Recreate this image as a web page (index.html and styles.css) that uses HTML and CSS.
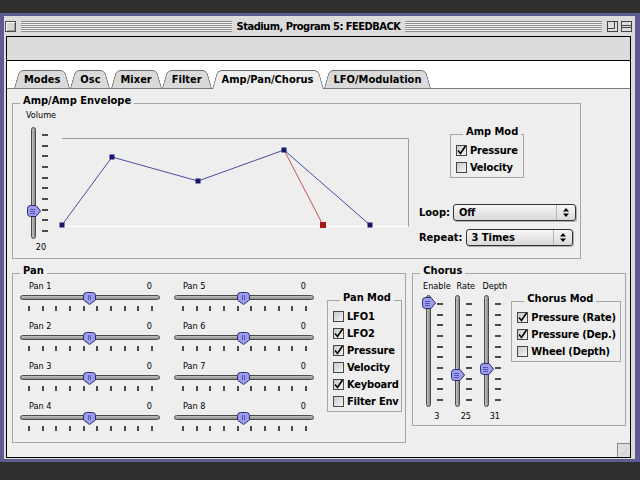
FILE: index.html
```html
<!DOCTYPE html>
<html lang="en">
<head>
    <meta charset="UTF-8">
    <title>Stadium, Program 5: FEEDBACK</title>
    <link rel="stylesheet" href="styles.css">
</head>
<body>
<svg class="defs" width="0" height="0" aria-hidden="true">
    <defs>
        <g id="thumb-down">
            <path d="M0.5 3.5Q0.5 0.5 3.5 0.5H9.5Q12.5 0.5 12.5 3.5V8L6.5 12.5L0.5 8Z" fill="#9d9df0" stroke="#2c2c6c"/>
            <path d="M5.5 3V8M7.5 3V8" stroke="#5656b0"/>
        </g>
        <g id="thumb-right">
            <path d="M3.5 0.5H9L13.5 6L9 11.5H3.5Q0.5 11.5 0.5 8.5V3.5Q0.5 0.5 3.5 0.5Z" fill="#9d9df0" stroke="#2c2c6c"/>
            <path d="M3 4.5H8M3 6.5H8M3 8.5H8" stroke="#5656b0"/>
        </g>
        <g id="tick">
            <path d="M2 5.5L4.5 8.5L9.5 1" fill="none" stroke="#000" stroke-width="1.6"/>
        </g>
    </defs>
</svg>

<div class="window">
    <div class="titlebar">
        <span class="close-box"></span>
        <span class="stripes left"></span>
        <span class="title">Stadium, Program 5: FEEDBACK</span>
        <span class="stripes"></span>
        <svg class="wbox" viewBox="0 0 11 11"><rect x="0.5" y="0.5" width="10" height="10" fill="#dedede" stroke="#444"/><path d="M0.5 7.5H7.5V0.5" fill="none" stroke="#444"/></svg>
        <svg class="wbox" viewBox="0 0 11 11"><rect x="0.5" y="0.5" width="10" height="10" fill="#dedede" stroke="#444"/><path d="M0.5 4.5H10.5M0.5 6.5H10.5" stroke="#444"/></svg>
    </div>

    <div class="content">
        <div class="toolbar"></div>
        <div class="tabs">
            <span class="tab">Modes</span>
            <span class="tab">Osc</span>
            <span class="tab">Mixer</span>
            <span class="tab">Filter</span>
            <span class="tab active">Amp/Pan/Chorus</span>
            <span class="tab">LFO/Modulation</span>
        </div>

        <div class="panel">
            <fieldset class="group amp">
                <legend>Amp/Amp Envelope</legend>
                <div class="amp-body">
                    <div class="volume">
                        <div class="small">Volume</div>
                        <div class="vslider tall">
                            <div class="vtrack"></div>
                            <div class="vticks"><i></i><i></i><i></i><i></i><i></i><i></i><i></i><i></i><i></i><i></i></div>
                            <svg class="thumb-r" style="top: 78px"><use href="#thumb-right"/></svg>
                        </div>
                        <div class="small value">20</div>
                    </div>

                    <svg class="envelope" width="347" height="90">
                        <path d="M0 0.5H346.5V88.5" fill="none" stroke="#9c9c9c"/>
                        <path d="M0 88.5H346" stroke="#fff"/>
                        <polyline points="0,87 50,19 136,43 222,12 308,87" fill="none" stroke="#4b4ba2"/>
                        <line x1="222" y1="12" x2="261" y2="87" stroke="#c45454"/>
                        <rect x="-2.5" y="84.5" width="5" height="5" fill="#16166e"/>
                        <rect x="47.5" y="16.5" width="5" height="5" fill="#16166e"/>
                        <rect x="133.5" y="40.5" width="5" height="5" fill="#16166e"/>
                        <rect x="219.5" y="9.5" width="5" height="5" fill="#16166e"/>
                        <rect x="305.5" y="84.5" width="5" height="5" fill="#16166e"/>
                        <rect x="258" y="84" width="6" height="6" fill="#a3191c"/>
                    </svg>

                    <div class="amp-side">
                        <fieldset class="group amp-mod">
                            <legend>Amp Mod</legend>
                            <div class="check"><span class="box"><svg><use href="#tick"/></svg></span>Pressure</div>
                            <div class="check"><span class="box"></span>Velocity</div>
                        </fieldset>
                        <div class="popup-row loop">
                            <span>Loop:</span>
                            <div class="popup"><span>Off</span><svg viewBox="0 0 18 15"><path d="M9 3L12 6.5H6ZM9 12L12 8.5H6Z" fill="#000"/></svg></div>
                        </div>
                        <div class="popup-row repeat">
                            <span>Repeat:</span>
                            <div class="popup"><span>3 Times</span><svg viewBox="0 0 18 15"><path d="M9 3L12 6.5H6ZM9 12L12 8.5H6Z" fill="#000"/></svg></div>
                        </div>
                    </div>
                </div>
            </fieldset>

            <div class="bottom-row">
                <fieldset class="group pan">
                    <legend>Pan</legend>
                    <div class="pan-body">
                        <div class="pan-col">
                            <div class="hslider">
                                <div class="hlabel"><span>Pan 1</span><span>0</span></div>
                                <div class="htrack"></div>
                                <div class="hticks"><i></i><i></i><i></i><i></i><i></i><i></i><i></i><i></i><i></i><i></i></div>
                                <svg class="thumb-d"><use href="#thumb-down"/></svg>
                            </div>
                            <div class="hslider">
                                <div class="hlabel"><span>Pan 2</span><span>0</span></div>
                                <div class="htrack"></div>
                                <div class="hticks"><i></i><i></i><i></i><i></i><i></i><i></i><i></i><i></i><i></i><i></i></div>
                                <svg class="thumb-d"><use href="#thumb-down"/></svg>
                            </div>
                            <div class="hslider">
                                <div class="hlabel"><span>Pan 3</span><span>0</span></div>
                                <div class="htrack"></div>
                                <div class="hticks"><i></i><i></i><i></i><i></i><i></i><i></i><i></i><i></i><i></i><i></i></div>
                                <svg class="thumb-d"><use href="#thumb-down"/></svg>
                            </div>
                            <div class="hslider">
                                <div class="hlabel"><span>Pan 4</span><span>0</span></div>
                                <div class="htrack"></div>
                                <div class="hticks"><i></i><i></i><i></i><i></i><i></i><i></i><i></i><i></i><i></i><i></i></div>
                                <svg class="thumb-d"><use href="#thumb-down"/></svg>
                            </div>
                        </div>
                        <div class="pan-col">
                            <div class="hslider">
                                <div class="hlabel"><span>Pan 5</span><span>0</span></div>
                                <div class="htrack"></div>
                                <div class="hticks"><i></i><i></i><i></i><i></i><i></i><i></i><i></i><i></i><i></i><i></i></div>
                                <svg class="thumb-d"><use href="#thumb-down"/></svg>
                            </div>
                            <div class="hslider">
                                <div class="hlabel"><span>Pan 6</span><span>0</span></div>
                                <div class="htrack"></div>
                                <div class="hticks"><i></i><i></i><i></i><i></i><i></i><i></i><i></i><i></i><i></i><i></i></div>
                                <svg class="thumb-d"><use href="#thumb-down"/></svg>
                            </div>
                            <div class="hslider">
                                <div class="hlabel"><span>Pan 7</span><span>0</span></div>
                                <div class="htrack"></div>
                                <div class="hticks"><i></i><i></i><i></i><i></i><i></i><i></i><i></i><i></i><i></i><i></i></div>
                                <svg class="thumb-d"><use href="#thumb-down"/></svg>
                            </div>
                            <div class="hslider">
                                <div class="hlabel"><span>Pan 8</span><span>0</span></div>
                                <div class="htrack"></div>
                                <div class="hticks"><i></i><i></i><i></i><i></i><i></i><i></i><i></i><i></i><i></i><i></i></div>
                                <svg class="thumb-d"><use href="#thumb-down"/></svg>
                            </div>
                        </div>
                        <fieldset class="group pan-mod">
                            <legend>Pan Mod</legend>
                            <div class="check"><span class="box"></span>LFO1</div>
                            <div class="check"><span class="box"><svg><use href="#tick"/></svg></span>LFO2</div>
                            <div class="check"><span class="box"><svg><use href="#tick"/></svg></span>Pressure</div>
                            <div class="check"><span class="box"></span>Velocity</div>
                            <div class="check"><span class="box"><svg><use href="#tick"/></svg></span>Keyboard</div>
                            <div class="check"><span class="box"></span>Filter Env</div>
                        </fieldset>
                    </div>
                </fieldset>

                <fieldset class="group chorus">
                    <legend>Chorus</legend>
                    <div class="chorus-body">
                        <div class="vunit">
                            <div class="small">Enable</div>
                            <div class="vslider">
                                <div class="vtrack"></div>
                                <div class="vticks"><i></i><i></i><i></i><i></i><i></i><i></i><i></i><i></i><i></i><i></i></div>
                                <svg class="thumb-r" style="top: 2px"><use href="#thumb-right"/></svg>
                            </div>
                            <div class="small value">3</div>
                        </div>
                        <div class="vunit">
                            <div class="small">Rate</div>
                            <div class="vslider">
                                <div class="vtrack"></div>
                                <div class="vticks"><i></i><i></i><i></i><i></i><i></i><i></i><i></i><i></i><i></i><i></i></div>
                                <svg class="thumb-r" style="top: 74px"><use href="#thumb-right"/></svg>
                            </div>
                            <div class="small value">25</div>
                        </div>
                        <div class="vunit">
                            <div class="small">Depth</div>
                            <div class="vslider">
                                <div class="vtrack"></div>
                                <div class="vticks"><i></i><i></i><i></i><i></i><i></i><i></i><i></i><i></i><i></i><i></i></div>
                                <svg class="thumb-r" style="top: 68px"><use href="#thumb-right"/></svg>
                            </div>
                            <div class="small value">31</div>
                        </div>
                        <fieldset class="group chorus-mod">
                            <legend>Chorus Mod</legend>
                            <div class="check"><span class="box"><svg><use href="#tick"/></svg></span>Pressure (Rate)</div>
                            <div class="check"><span class="box"><svg><use href="#tick"/></svg></span>Pressure (Dep.)</div>
                            <div class="check"><span class="box"></span>Wheel (Depth)</div>
                        </fieldset>
                    </div>
                </fieldset>
            </div>
        </div>

        <svg class="grow-box" viewBox="0 0 13 14"><path d="M4 12L11 5M7 12L11 8M10 12L11 11" stroke="#9a9a9a"/><path d="M5 12L12 5M8 12L12 8" stroke="#fff"/></svg>
    </div>
</div>
</body>
</html>
```

FILE: styles.css
```css
body {
    margin: 0;
    background: #2f2f2f;
    font-family: "DejaVu Sans Condensed", "DejaVu Sans", sans-serif;
    color: #000;
}
.defs {
    position: absolute;
}

/* window frame */
.window {
    margin-top: 13px;
    height: 449px;
    box-sizing: border-box;
    border: 3px solid #5d5b8f;
    border-left-width: 4px;
    border-right-width: 5px;
    background: #dcdcdc;
    display: flex;
    flex-direction: column;
}
.titlebar {
    height: 20px;
    display: flex;
    align-items: center;
    padding: 0 3px 0 1px;
}
.close-box {
    width: 11px;
    height: 11px;
    box-sizing: border-box;
    border: 1px solid #4a4a4a;
    background: #d6d6d6;
    box-shadow: inset 1px 1px 0 #fff, inset -1px -1px 0 #a0a0a0;
}
.stripes {
    flex: 1 1 0;
    height: 11px;
    margin: 0 5px;
    background: repeating-linear-gradient(to bottom, #8e8e8e 0 1px, #f2f2f2 1px 2px);
}
.stripes.left {
    flex-basis: 14px;
}
.title {
    font-weight: bold;
    font-size: 11px;
    letter-spacing: -0.5px;
    white-space: nowrap;
}
.wbox {
    width: 11px;
    height: 11px;
    margin-left: 3px;
}
.stripes + .wbox {
    margin-left: 0;
}

.content {
    flex: 1;
    margin: 0 4px 1px 2px;
    border: 1px solid #000;
    display: flex;
    flex-direction: column;
    background: #fff;
    position: relative;
}
.toolbar {
    height: 23px;
    background: #dcdcdc;
    border-bottom: 1px solid #000;
}

/* tabs */
.tabs {
    height: 27px;
    display: flex;
    align-items: flex-end;
    padding-left: 7px;
    background: #fff;
}
.tab {
    position: relative;
    z-index: 0;
    height: 18px;
    line-height: 19px;
    padding: 0 10px;
    font-weight: bold;
    font-size: 11px;
}
.tab::before,
.tab::after {
    content: "";
    position: absolute;
    top: 0;
    bottom: 0;
    z-index: -1;
    background: #dadada;
    border-top: 1px solid #6a6a6a;
}
.tab::before {
    left: 0;
    right: calc(50% - 1px);
    border-left: 1px solid #6a6a6a;
    border-top-left-radius: 5px;
    transform: skewX(-16deg);
    transform-origin: 0 100%;
}
.tab::after {
    left: 50%;
    right: 0;
    border-right: 1px solid #6a6a6a;
    border-top-right-radius: 5px;
    transform: skewX(16deg);
    transform-origin: 100% 100%;
}
.tab.active {
    z-index: 2;
    height: 19px;
    margin-bottom: -1px;
}
.tab.active::before,
.tab.active::after {
    background: #eeeeee;
}

.panel {
    flex: 1;
    background: #eeeeee;
    border-top: 1px solid #7a7a7a;
    padding: 6px 4px 0 5px;
    position: relative;
    z-index: 1;
}

/* group boxes */
.group {
    margin: 0;
    padding: 0;
    min-width: 0;
    box-sizing: border-box;
    border: 1px solid #a6a6a6;
}
.group legend {
    margin-left: 7px;
    padding: 0 3px 4px;
    font-weight: bold;
    font-size: 11px;
    line-height: 12px;
}
.amp {
    width: 569px;
    height: 164px;
}
.amp-body {
    display: flex;
    align-items: flex-start;
}

.small {
    font-size: 9px;
    line-height: 11px;
    white-space: nowrap;
}
.volume {
    width: 34px;
    margin-left: 11px;
    display: flex;
    flex-direction: column;
    align-items: center;
}
.volume .small:first-child {
    line-height: 9px;
}
.volume .vslider {
    margin: 7px 0 0 -4px;
}
.volume .value {
    margin-top: 3px;
}

/* vertical sliders */
.vslider {
    position: relative;
    display: flex;
    gap: 6px;
}
.vtrack {
    width: 3px;
    height: 110px;
    border: 1px solid #4a4a4a;
    border-radius: 3px;
    background: linear-gradient(to right, #c4c4c4, #8a8a8a);
}
.vticks {
    width: 6px;
    display: flex;
    flex-direction: column;
    justify-content: space-between;
    padding: 7px 0 7px;
}
.vticks i {
    height: 2px;
    background: #4a4a4a;
}
.thumb-r {
    position: absolute;
    left: -4px;
    width: 14px;
    height: 12px;
}

.envelope {
    margin: 27px 0 0 4px;
    overflow: visible;
}

.amp-side {
    width: 161px;
    margin-left: 10px;
    display: flex;
    flex-direction: column;
    align-items: flex-start;
}
.amp-mod {
    width: 74px;
    height: 52px;
    margin: 15px 0 0 31px;
    padding-left: 5px;
}

/* checkboxes */
.check {
    display: flex;
    align-items: center;
    gap: 3px;
    height: 17px;
    font-weight: bold;
    font-size: 11px;
    letter-spacing: -0.2px;
    white-space: nowrap;
}
.box {
    width: 11px;
    height: 11px;
    box-sizing: border-box;
    border: 1px solid #474747;
    background: linear-gradient(135deg, #c9c9c9, #f4f4f4);
    position: relative;
}
.box svg {
    position: absolute;
    left: -1px;
    top: -1px;
    width: 11px;
    height: 11px;
}

/* popup menus */
.popup-row {
    display: flex;
    align-items: center;
    gap: 3px;
    font-weight: bold;
    font-size: 11px;
}
.popup-row.loop {
    margin-top: 26px;
}
.popup-row.repeat {
    margin-top: 8px;
}
.popup {
    height: 17px;
    box-sizing: border-box;
    border: 1px solid #333;
    border-radius: 3px;
    background: linear-gradient(#f7f7f7, #d9d9d9);
    box-shadow: 1px 1px 0 #b0b0b0;
    display: flex;
    align-items: center;
}
.popup span {
    flex: 1;
    padding-left: 5px;
}
.popup svg {
    width: 18px;
    height: 15px;
    border-left: 1px solid #b4b4b4;
}
.loop .popup {
    width: 123px;
}
.repeat .popup {
    width: 107px;
}

/* bottom groups */
.bottom-row {
    display: flex;
    align-items: flex-start;
    gap: 6px;
    margin-top: 6px;
}
.pan {
    width: 395px;
    height: 178px;
}
.pan-body {
    display: flex;
    align-items: flex-start;
}
.pan-col {
    width: 140px;
    margin-left: 7px;
}
.pan-col + .pan-col {
    margin-left: 14px;
}

.hslider {
    position: relative;
    height: 40px;
}
.hlabel {
    display: flex;
    justify-content: space-between;
    padding: 0 8px 0 9px;
    font-size: 9px;
    line-height: 11px;
}
.htrack {
    margin-top: 3px;
    height: 3px;
    border: 1px solid #4a4a4a;
    border-radius: 3px;
    background: linear-gradient(#c4c4c4, #8a8a8a);
}
.hticks {
    display: flex;
    justify-content: space-between;
    margin-top: 6px;
    padding: 0 7px 0 8px;
}
.hticks i {
    width: 2px;
    height: 5px;
    background: #4a4a4a;
}
.thumb-d {
    position: absolute;
    left: 63px;
    top: 11px;
    width: 13px;
    height: 13px;
}

.pan-mod {
    width: 75px;
    height: 120px;
    margin: 11px 0 0 13px;
    padding-left: 5px;
}

.chorus {
    width: 214px;
    height: 161px;
}
.chorus-body {
    display: flex;
    align-items: flex-start;
    padding-left: 9px;
}
.vunit {
    width: 29px;
    display: flex;
    flex-direction: column;
    align-items: center;
}
.vunit .vslider {
    margin: 3px 0 0 -5px;
}
.vunit .vtrack {
    height: 110px;
}
.vunit .vticks {
    padding: 8px 0 6px;
}
.vunit .value {
    margin-top: 4px;
}
.chorus-mod {
    width: 110px;
    height: 69px;
    margin: 12px 0 0 2px;
    padding-left: 5px;
}

.grow-box {
    position: absolute;
    right: 0;
    bottom: 0;
    z-index: 3;
    width: 13px;
    height: 14px;
    box-sizing: border-box;
    border-top: 1px solid #8a8a8a;
    border-left: 1px solid #8a8a8a;
    background: #dedede;
}
```
